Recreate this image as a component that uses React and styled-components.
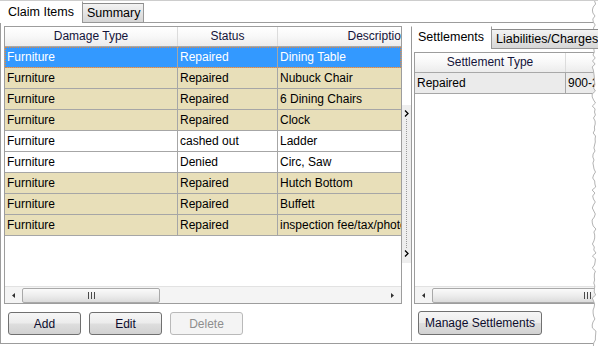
import React from 'react';
import styled, { createGlobalStyle } from 'styled-components';

const claimColumns = [
  { title: 'Damage Type', width: 173 },
  { title: 'Status', width: 100 },
  { title: 'Description', width: 200 },
];

const claimItems = [
  { type: 'Furniture', status: 'Repaired', desc: 'Dining Table', tone: 'selected' },
  { type: 'Furniture', status: 'Repaired', desc: 'Nubuck Chair', tone: 'tan' },
  { type: 'Furniture', status: 'Repaired', desc: '6 Dining Chairs', tone: 'tan' },
  { type: 'Furniture', status: 'Repaired', desc: 'Clock', tone: 'tan' },
  { type: 'Furniture', status: 'cashed out', desc: 'Ladder', tone: 'plain' },
  { type: 'Furniture', status: 'Denied', desc: 'Circ, Saw', tone: 'plain' },
  { type: 'Furniture', status: 'Repaired', desc: 'Hutch Bottom', tone: 'tan' },
  { type: 'Furniture', status: 'Repaired', desc: 'Buffett', tone: 'tan' },
  { type: 'Furniture', status: 'Repaired', desc: 'inspection fee/tax/photos', tone: 'tan' },
];

const settlementColumns = [
  { title: 'Settlement Type', width: 151 },
  { title: 'Amount', width: 150 },
];

const settlements = [{ type: 'Repaired', amount: '900-2345', tone: 'grey' }];

const toneBg = {
  selected: '#3399ff',
  tan: '#e8dfb9',
  plain: '#ffffff',
  grey: '#ebebeb',
};

// jagged "torn paper" edge on the right side of the capture
const tornEdge = (() => {
  const pts = [];
  let seed = 11;
  for (let y = 0; y <= 346; y += 3) {
    seed = (seed * 9301 + 49297) % 233280;
    pts.push(`${(4 + (seed / 233280) * 4).toFixed(1)},${y}`);
  }
  return pts.join(' ');
})();

const GlobalStyle = createGlobalStyle`
  html, body {
    margin: 0;
    padding: 0;
    background: #ffffff;
  }
  body {
    font-family: "Liberation Sans", Arial, sans-serif;
    color: #000;
  }
`;

const Screen = styled.div`
  position: relative;
  width: 598px;
  height: 346px;
  overflow: hidden;
  background: #fff;
  border-top: 1px solid #cdcdcd;
  box-sizing: border-box;
`;

const TabStrip = styled.div`
  display: flex;
  align-items: flex-end;
  height: 22px;
  margin-bottom: -1px;
  position: relative;
  z-index: 1;
`;

const Tab = styled.div`
  box-sizing: border-box;
  flex: none;
  width: ${(p) => p.$w}px;
  height: ${(p) => (p.$active ? 22 : 20)}px;
  padding-left: ${(p) => p.$pad}px;
  font-size: 12.5px;
  line-height: ${(p) => (p.$active ? 20 : 19)}px;
  white-space: nowrap;
  overflow: hidden;
  background: ${(p) => (p.$active ? '#ffffff' : 'linear-gradient(#f3f3f3, #e4e4e4 50%, #d6d6d6)')};
  border-top: 1px solid ${(p) => (p.$active ? 'transparent' : '#8b8b8b')};
  border-right: 1px solid #979797;
  border-left: ${(p) => (p.$left ? '1px solid #979797' : 'none')};
  border-bottom: ${(p) => (p.$active ? 'none' : '1px solid #979797')};
`;

const Panel = styled.div`
  box-sizing: border-box;
  width: 760px;
  height: 322px;
  display: flex;
  align-items: flex-start;
  padding: 3px 0 0 3px;
  border-top: 1px solid #9c9c9c;
  border-left: 1px solid #9c9c9c;
  border-bottom: 1px solid #9c9c9c;
`;

const Column = styled.div`
  flex: none;
  display: flex;
  flex-direction: column;
`;

const Grid = styled.div`
  box-sizing: border-box;
  flex: none;
  width: ${(p) => p.$w}px;
  height: ${(p) => p.$h}px;
  display: flex;
  flex-direction: column;
  overflow: hidden;
  border: 1px solid #9d9d9d;
  background: #fff;
`;

const HeaderRow = styled.div`
  flex: none;
  display: flex;
  height: 20px;
  box-sizing: border-box;
  border-bottom: 1px solid #a8a8a8;
  background: linear-gradient(#ffffff, #f9f9f9 45%, #ececec);
`;

const HeadCell = styled.div`
  flex: none;
  box-sizing: border-box;
  width: ${(p) => p.$w}px;
  border-right: 1px solid #dcdcdc;
  text-align: center;
  font-size: 12px;
  line-height: 19px;
  color: #14143a;
  white-space: nowrap;
  overflow: hidden;
`;

const Body = styled.div`
  flex: 1;
  overflow: hidden;
`;

const Row = styled.div`
  display: flex;
  height: 21px;
  box-sizing: border-box;
  border-bottom: 1px solid #a6a6a6;
  background: ${(p) => toneBg[p.$tone]};
  color: ${(p) => (p.$tone === 'selected' ? '#ffffff' : '#000000')};
  outline: ${(p) => (p.$tone === 'selected' ? '1px dotted #e8883a' : 'none')};
  outline-offset: -1px;
`;

const Cell = styled.div`
  flex: none;
  box-sizing: border-box;
  width: ${(p) => p.$w}px;
  padding-left: 2px;
  border-right: 1px solid #a6a6a6;
  font-size: 12px;
  line-height: 20px;
  white-space: nowrap;
  overflow: hidden;
`;

const Track = styled.div`
  flex: none;
  box-sizing: border-box;
  height: 17px;
  display: flex;
  align-items: center;
  padding: 0 7px;
  border-top: 1px solid #e2e2e2;
  background: #f4f4f4;
`;

const Thumb = styled.div`
  flex: none;
  box-sizing: border-box;
  width: ${(p) => p.$w}px;
  height: 15px;
  margin-left: 7px;
  display: flex;
  align-items: center;
  justify-content: center;
  border: 1px solid #a9a9a9;
  border-radius: 2px;
  background: linear-gradient(#fafafa, #ededed 50%, #dcdcdc);
`;

const ArrowSlot = styled.div`
  flex: none;
  display: flex;
  margin-left: ${(p) => (p.$end ? 'auto' : '0')};
`;

const Splitter = styled.div`
  flex: none;
  box-sizing: border-box;
  width: 9px;
  height: 158px;
  margin-top: 79px;
  padding: 5px 0 6px;
  display: flex;
  flex-direction: column;
  align-items: center;
  background: #eeeeee;
`;

const DotLine = styled.div`
  flex: 1;
  width: 0;
  margin: 2px 0;
  border-left: 1px dotted #9a9a9a;
`;

const ButtonRow = styled.div`
  display: flex;
  gap: 8px;
  margin-top: ${(p) => p.$top}px;
  padding-left: 4px;
`;

const Button = styled.button`
  box-sizing: border-box;
  flex: none;
  width: ${(p) => p.$w}px;
  height: ${(p) => p.$h || 23}px;
  padding: 0;
  font-family: "Liberation Sans", Arial, sans-serif;
  font-size: 12px;
  color: #0c0c2c;
  border: 1px solid #707070;
  border-radius: 3px;
  background: linear-gradient(#f6f6f6, #ececec 48%, #dedede 52%, #d2d2d2);

  &:disabled {
    color: #8e8e8e;
    border-color: #b9b9b9;
    background: #f4f4f4;
  }
`;

const SidePanel = styled.div`
  flex: none;
  width: 345px;
  height: 315px;
  display: flex;
  flex-direction: column;
`;

const SideTabs = styled.div`
  display: flex;
  align-items: flex-end;
  height: 23px;
  margin-bottom: -1px;
  position: relative;
  z-index: 1;
`;

const SideBody = styled.div`
  flex: 1;
  box-sizing: border-box;
  padding: 3px 0 0 2px;
  border-top: 1px solid #9c9c9c;
  border-left: 1px solid #9c9c9c;
`;

const Torn = styled.svg`
  position: absolute;
  top: 0;
  right: 0;
  width: 10px;
  height: 346px;
`;

function ScrollArrow({ right }) {
  return (
    <svg width="3" height="5" viewBox="0 0 3 5">
      <polygon points={right ? '0,0 3,2.5 0,5' : '3,0 0,2.5 3,5'} fill="#303030" />
    </svg>
  );
}

function Grip() {
  return (
    <svg width="7" height="7" viewBox="0 0 7 7">
      <rect x="0" y="0" width="1" height="7" fill="#4a4a4a" />
      <rect x="3" y="0" width="1" height="7" fill="#4a4a4a" />
      <rect x="6" y="0" width="1" height="7" fill="#4a4a4a" />
    </svg>
  );
}

function Chevron() {
  return (
    <svg width="5" height="7" viewBox="0 0 5 7">
      <polyline points="1,0.5 4,3.5 1,6.5" fill="none" stroke="#000" strokeWidth="1.3" />
    </svg>
  );
}

function DataGrid({ columns, rows, fields, width, height, thumb }) {
  return (
    <Grid $w={width} $h={height}>
      <HeaderRow>
        {columns.map((c) => (
          <HeadCell key={c.title} $w={c.width}>{c.title}</HeadCell>
        ))}
      </HeaderRow>
      <Body>
        {rows.map((r, idx) => (
          <Row key={idx} $tone={r.tone}>
            {fields.map((f, i) => (
              <Cell key={f} $w={columns[i].width}>{r[f]}</Cell>
            ))}
          </Row>
        ))}
      </Body>
      <Track>
        <ArrowSlot><ScrollArrow /></ArrowSlot>
        <Thumb $w={thumb}><Grip /></Thumb>
        <ArrowSlot $end><ScrollArrow right /></ArrowSlot>
      </Track>
    </Grid>
  );
}

export default function App() {
  return (
    <>
      <GlobalStyle />
      <Screen>
        <TabStrip>
          <Tab $active $w={83} $pad={8}>Claim Items</Tab>
          <Tab $w={61} $pad={4}>Summary</Tab>
        </TabStrip>
        <Panel>
          <Column>
            <DataGrid
              columns={claimColumns}
              rows={claimItems}
              fields={['type', 'status', 'desc']}
              width={398}
              height={278}
              thumb={138}
            />
            <ButtonRow $top={8}>
              <Button $w={73}>Add</Button>
              <Button $w={73}>Edit</Button>
              <Button $w={73} disabled>Delete</Button>
            </ButtonRow>
          </Column>
          <Splitter>
            <Chevron />
            <DotLine />
            <Chevron />
          </Splitter>
          <SidePanel>
            <SideTabs>
              <Tab $active $left $w={81} $pad={6} style={{ height: 23, lineHeight: '21px' }}>Settlements</Tab>
              <Tab $w={140} $pad={4}>Liabilities/Charges</Tab>
            </SideTabs>
            <SideBody>
              <DataGrid
                columns={settlementColumns}
                rows={settlements}
                fields={['type', 'amount']}
                width={340}
                height={252}
                thumb={310}
              />
              <ButtonRow $top={7}>
                <Button $w={124} $h={24}>Manage Settlements</Button>
              </ButtonRow>
            </SideBody>
          </SidePanel>
        </Panel>
        <Torn viewBox="0 0 10 346" preserveAspectRatio="none">
          <polygon points={`${tornEdge} 10,346 10,0`} fill="#ffffff" />
          <polyline points={tornEdge} fill="none" stroke="#b4b4b4" strokeWidth="1" />
        </Torn>
      </Screen>
    </>
  );
}
